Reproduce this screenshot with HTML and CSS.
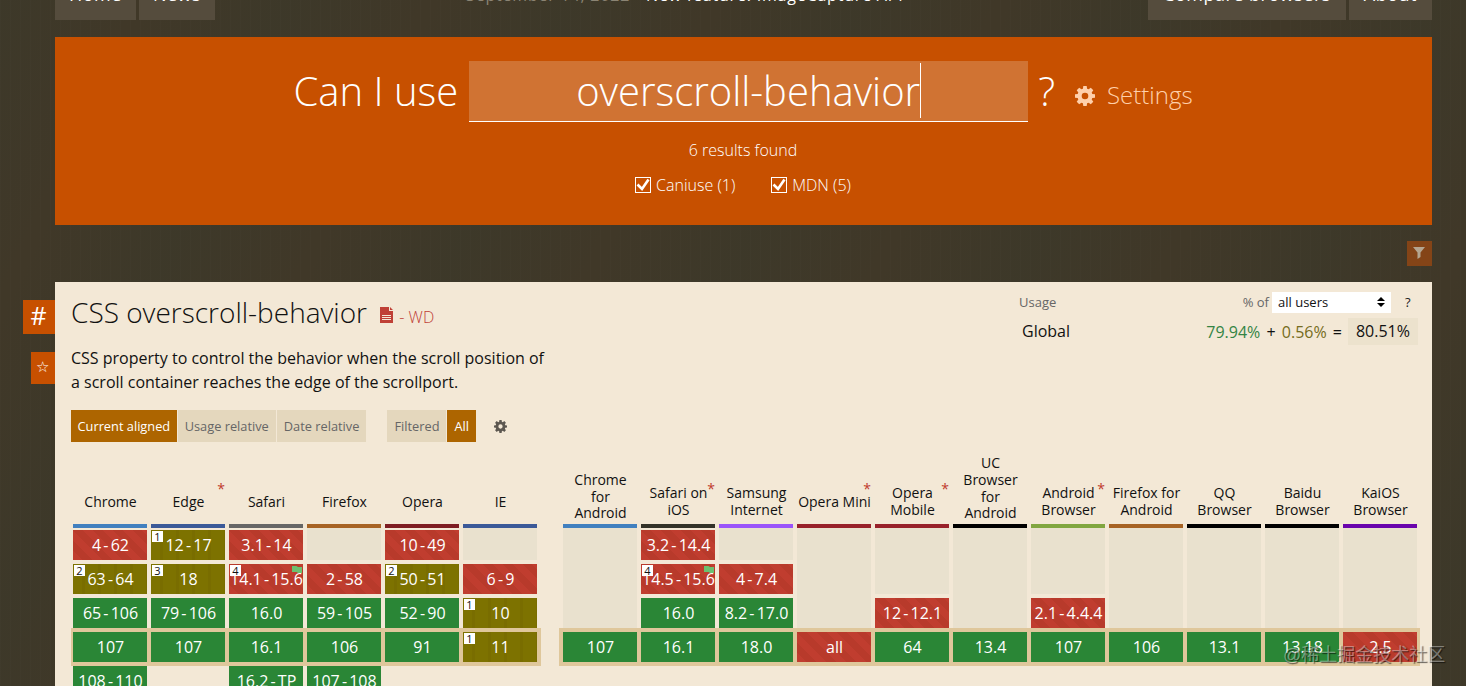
FILE: index.html
```
<!DOCTYPE html>
<html lang="en">
<head>
    <meta charset="UTF-8">
    <meta name="viewport" content="width=device-width, initial-scale=1.0">
    <title>Can I use... overscroll-behavior</title>
    <link rel="stylesheet" href="styles.css">
</head>
<body>
    <svg class="defs" width="0" height="0">
        <symbol id="gear" viewBox="0 0 20 20">
            <path fill-rule="evenodd" d="M8.3 0h3.4l.4 2.7 1.5.6 2.2-1.6 2.5 2.5-1.6 2.2.6 1.5 2.7.4v3.4l-2.7.4-.6 1.5 1.6 2.2-2.5 2.5-2.2-1.6-1.5.6-.4 2.7H8.3l-.4-2.7-1.5-.6-2.2 1.6-2.5-2.5 1.6-2.2-.6-1.5L0 11.7V8.3l2.7-.4.6-1.5L1.7 4.2l2.5-2.5 2.2 1.6 1.5-.6zM10 6.700a3.300 3.300 0 1 0 0 6.600 3.300 3.300 0 0 0 0-6.600z"/>
        </symbol>
    </svg>

    <div class="page">
        <header class="topbar">
            <nav>
                <a href="#">Home</a>
                <a href="#">News</a>
            </nav>
            <p class="news"><span>September 14, 2022</span> - New feature: ImageCapture API</p>
            <nav class="right">
                <a href="#">Compare browsers</a>
                <a href="#">About</a>
            </nav>
        </header>

        <section class="hero">
            <div class="search">
                <span class="big">Can I use</span>
                <div class="search-box"><span>overscroll-behavior</span></div>
                <span class="big">?</span>
                <a class="settings" href="#"><svg><use href="#gear"/></svg>Settings</a>
            </div>
            <p class="results">6 results found</p>
            <div class="filters">
                <label><i class="check"><svg viewBox="0 0 14 14"><path d="M1.500 6.500L6 11l6.500-9.500"/></svg></i>Caniuse (1)</label>
                <label><i class="check"><svg viewBox="0 0 14 14"><path d="M1.500 6.500L6 11l6.500-9.500"/></svg></i>MDN (5)</label>
            </div>
        </section>

        <div class="toolbar">
            <a class="filter-btn" href="#"><svg viewBox="0 0 12 12"><path d="M0 0h12L7.500 5.500V10L4.500 12V5.500z"/></svg></a>
        </div>

        <article class="feature">
            <a class="side hash" href="#">#</a>
            <a class="side star" href="#">☆</a>

            <div class="feature-top">
                <div class="info">
                    <h1>CSS overscroll-behavior
                        <a class="spec" href="#"><svg viewBox="0 0 13 16"><path d="M0 0h9v4h4v12H0zM10 0l3 3h-3z"/><path class="lines" d="M2 8.500h9M2 10.500h9M2 12.500h9"/></svg>- WD</a>
                    </h1>
                    <p class="desc">CSS property to control the behavior when the scroll position of<br>a scroll container reaches the edge of the scrollport.</p>
                </div>
                <div class="usage">
                    <div class="usage-row small">
                        <span class="label">Usage</span>
                        <span class="of">% of</span>
                        <div class="select">all users<svg viewBox="0 0 8 10"><path d="M0 4l4-4 4 4zM0 6h8l-4 4z"/></svg></div>
                        <span class="help">?</span>
                    </div>
                    <div class="usage-row">
                        <span class="global">Global</span>
                        <span class="sum"><b class="yes">79.94%</b> + <b class="part">0.56%</b> =</span>
                        <span class="total">80.51%</span>
                    </div>
                </div>
            </div>

            <div class="modes">
                <a class="active" href="#">Current aligned</a>
                <a href="#">Usage relative</a>
                <a href="#">Date relative</a>
                <a class="gap" href="#">Filtered</a>
                <a class="active" href="#">All</a>
                <svg><use href="#gear"/></svg>
            </div>

            <div class="tables">
                <div class="table desktop">
                    <div class="col">
                        <h4>Chrome</h4>
                        <ol class="chrome">
                            <li class="n">4 - 62</li>
                            <li class="a"><sup>2</sup>63 - 64</li>
                            <li class="y">65 - 106</li>
                            <li class="y current">107</li>
                            <li class="y">108 - 110</li>
                        </ol>
                    </div>
                    <div class="col">
                        <h4>Edge<em>*</em></h4>
                        <ol class="edge">
                            <li class="a"><sup>1</sup>12 - 17</li>
                            <li class="a"><sup>3</sup>18</li>
                            <li class="y">79 - 106</li>
                            <li class="y current">107</li>
                        </ol>
                    </div>
                    <div class="col">
                        <h4>Safari</h4>
                        <ol class="safari">
                            <li class="n">3.1 - 14</li>
                            <li class="n flag"><sup>4</sup>14.1 - 15.6</li>
                            <li class="y">16.0</li>
                            <li class="y current">16.1</li>
                            <li class="y">16.2 - TP</li>
                        </ol>
                    </div>
                    <div class="col">
                        <h4>Firefox</h4>
                        <ol class="firefox">
                            <li class="empty"></li>
                            <li class="n">2 - 58</li>
                            <li class="y">59 - 105</li>
                            <li class="y current">106</li>
                            <li class="y">107 - 108</li>
                        </ol>
                    </div>
                    <div class="col">
                        <h4>Opera</h4>
                        <ol class="opera">
                            <li class="n">10 - 49</li>
                            <li class="a"><sup>2</sup>50 - 51</li>
                            <li class="y">52 - 90</li>
                            <li class="y current">91</li>
                        </ol>
                    </div>
                    <div class="col">
                        <h4>IE</h4>
                        <ol class="ie">
                            <li class="empty"></li>
                            <li class="n">6 - 9</li>
                            <li class="a"><sup>1</sup>10</li>
                            <li class="a current"><sup>1</sup>11</li>
                        </ol>
                    </div>
                </div>

                <div class="table mobile">
                    <div class="col">
                        <h4 class="tall">Chrome<br>for<br>Android</h4>
                        <ol class="chrome">
                            <li class="empty x3"></li>
                            <li class="y current">107</li>
                        </ol>
                    </div>
                    <div class="col">
                        <h4>Safari on<br>iOS<em>*</em></h4>
                        <ol class="ios">
                            <li class="n">3.2 - 14.4</li>
                            <li class="n flag"><sup>4</sup>14.5 - 15.6</li>
                            <li class="y">16.0</li>
                            <li class="y current">16.1</li>
                        </ol>
                    </div>
                    <div class="col">
                        <h4>Samsung<br>Internet</h4>
                        <ol class="samsung">
                            <li class="empty"></li>
                            <li class="n">4 - 7.4</li>
                            <li class="y">8.2 - 17.0</li>
                            <li class="y current">18.0</li>
                        </ol>
                    </div>
                    <div class="col">
                        <h4>Opera Mini<em>*</em></h4>
                        <ol class="op-mob">
                            <li class="empty x3"></li>
                            <li class="n current">all</li>
                        </ol>
                    </div>
                    <div class="col">
                        <h4>Opera<br>Mobile<em>*</em></h4>
                        <ol class="op-mob">
                            <li class="empty x2"></li>
                            <li class="n">12 - 12.1</li>
                            <li class="y current">64</li>
                        </ol>
                    </div>
                    <div class="col">
                        <h4 class="tall">UC<br>Browser<br>for<br>Android</h4>
                        <ol class="other">
                            <li class="empty x3"></li>
                            <li class="y current">13.4</li>
                        </ol>
                    </div>
                    <div class="col">
                        <h4>Android<br>Browser<em>*</em></h4>
                        <ol class="android">
                            <li class="empty x2"></li>
                            <li class="n">2.1 - 4.4.4</li>
                            <li class="y current">107</li>
                        </ol>
                    </div>
                    <div class="col">
                        <h4>Firefox for<br>Android</h4>
                        <ol class="firefox">
                            <li class="empty x3"></li>
                            <li class="y current">106</li>
                        </ol>
                    </div>
                    <div class="col">
                        <h4>QQ<br>Browser</h4>
                        <ol class="other">
                            <li class="empty x3"></li>
                            <li class="y current">13.1</li>
                        </ol>
                    </div>
                    <div class="col">
                        <h4>Baidu<br>Browser</h4>
                        <ol class="other">
                            <li class="empty x3"></li>
                            <li class="y current">13.18</li>
                        </ol>
                    </div>
                    <div class="col">
                        <h4>KaiOS<br>Browser</h4>
                        <ol class="kaios">
                            <li class="empty x3"></li>
                            <li class="n current">2.5</li>
                        </ol>
                    </div>
                </div>
            </div>
        </article>
    </div>

    <div class="watermark">@稀土掘金技术社区</div>
</body>
</html>
```
FILE: styles.css
```
* {
    box-sizing: border-box;
}
body {
    margin: 0;
    height: 686px;
    overflow: hidden;
    position: relative;
    font-family: "Open Sans", sans-serif;
    font-size: 16px;
    color: #111;
    background-color: #403828;
    background-image:
        repeating-linear-gradient(90deg, rgba(255, 255, 255, 0.012) 0 1px, transparent 1px 10px),
        repeating-linear-gradient(115deg, rgba(40, 60, 50, 0.12) 0, transparent 130px, rgba(40, 60, 50, 0.12) 260px);
}
a {
    color: inherit;
    text-decoration: none;
}
h1, h4, p, ol {
    margin: 0;
    padding: 0;
    font-weight: normal;
}
.defs {
    position: absolute;
}
.page {
    width: 1377px;
    margin-left: 55px;
}

/* top bar, scrolled mostly out of view */
.topbar {
    display: flex;
    height: 37px;
    color: #fff;
    font-size: 18px;
    letter-spacing: 0.5px;
}
.topbar nav {
    display: flex;
    gap: 3px;
}
.topbar nav.right {
    margin-left: auto;
}
.topbar nav a {
    padding: 0 14px;
    background: #554c3d;
}
.topbar nav.right a {
    padding: 0 15px;
}
.topbar nav a, .news {
    height: 36px;
    margin-top: -16px;
    line-height: 20px;
}
.news {
    margin-left: 251px;
    font-size: 16px;
    line-height: 23px;
    letter-spacing: 0.800px;
    white-space: nowrap;
}
.news span {
    color: #8b8474;
}

/* search */
.hero {
    height: 188px;
    padding: 24px 1px 0 0;
    background: #c75000;
    color: #fff;
    text-align: center;
}
.search {
    display: flex;
    justify-content: center;
    height: 61px;
}
.big {
    font-size: 40px;
    font-weight: 300;
    line-height: 60px;
}
.search-box {
    width: 559px;
    height: 61px;
    margin: 0 10px 0 11px;
    padding-top: 2px;
    background: #d07333;
    border-bottom: 1px solid #fff;
    font-size: 40px;
    font-weight: 300;
    line-height: 56px;
}
.search-box span {
    display: inline-block;
    height: 55px;
    border-right: 1px solid #fff;
}
.settings {
    display: flex;
    align-items: center;
    margin-left: 20px;
    padding-top: 5px;
    font-size: 24px;
    font-weight: 300;
    color: #ffd0ab;
}
.settings svg {
    width: 20px;
    height: 20px;
    margin: 3px 12px 0 0;
    fill: #ffd0ab;
}
.results {
    margin-top: 16px;
    font-weight: 300;
    line-height: 24px;
}
.filters {
    display: flex;
    justify-content: center;
    gap: 36px;
    margin-top: 11px;
    font-weight: 300;
    line-height: 24px;
}
.filters label {
    display: flex;
    align-items: center;
}
.check {
    display: flex;
    width: 16px;
    height: 16px;
    margin-right: 5px;
    border: 1px solid #fff;
}
.check svg {
    fill: none;
    stroke: #fff;
    stroke-width: 2.600;
}
.toolbar {
    display: flex;
    justify-content: flex-end;
    height: 57px;
    padding-top: 16px;
}
.filter-btn {
    display: flex;
    align-items: center;
    justify-content: center;
    width: 25px;
    height: 25px;
    padding: 0 1px 1px 0;
    background: #844417;
}
.filter-btn svg {
    width: 12px;
    height: 12px;
    fill: #b4a590;
}

/* feature card */
.feature {
    position: relative;
    height: 420px;
    padding: 8px 12px 0 16px;
    background: #f3e8d6;
}
.side {
    position: absolute;
    right: 100%;
    background: #c75000;
    color: #fff;
    text-align: center;
}
.hash {
    top: 18px;
    width: 32px;
    height: 34px;
    padding-right: 1px;
    font-size: 25px;
    line-height: 31px;
}
.star {
    top: 70px;
    width: 24px;
    height: 32px;
    padding-right: 1px;
    font-size: 15px;
    line-height: 28px;
}
.feature-top {
    display: flex;
    justify-content: space-between;
    height: 120px;
}
h1 {
    font-size: 28px;
    font-weight: 300;
    line-height: 44px;
}
.spec {
    margin-left: 6px;
    font-size: 16px;
    color: #bf4036;
}
.spec svg {
    width: 13px;
    height: 16px;
    margin-right: 6px;
    fill: #bf4036;
}
.spec .lines {
    stroke: #f3e8d6;
}
.desc {
    margin-top: 7px;
    line-height: 24px;
}
.usage {
    width: 401px;
}
.usage-row {
    display: flex;
    align-items: center;
    height: 27px;
    margin-top: 5px;
    padding: 0 2px 0 3px;
}
.usage-row.small {
    height: 23px;
    margin-top: 0;
    padding: 0;
    font-size: 13px;
    color: #666;
}
.label, .global {
    flex: 1;
}
.global {
    margin-top: -1px;
}
.select {
    display: flex;
    align-items: center;
    justify-content: space-between;
    width: 119px;
    height: 21px;
    margin: 1px 0 0 3px;
    padding: 0 6px 1px;
    background: #fff;
    color: #111;
}
.select svg {
    width: 8px;
    height: 10px;
}
.help {
    width: 29px;
    padding-left: 14px;
    color: #222;
}
.sum b {
    font-weight: normal;
}
.sum {
    word-spacing: 2px;
}
.yes {
    color: #338444;
}
.part {
    color: #756c20;
}
.total {
    margin-left: 6px;
    padding: 0 8px;
    line-height: 27px;
    background: #ece2cd;
}
.modes {
    display: flex;
    gap: 1px;
    height: 32px;
    font-size: 12.800px;
    line-height: 32px;
}
.modes a {
    padding: 0 7px;
    background: #e4d7bd;
    color: #666;
}
.modes a:first-child {
    padding: 0 6.500px;
}
.modes .gap {
    margin-left: 20px;
}
.modes .active {
    background: #ad6500;
    color: #fff;
}
.modes svg {
    width: 13px;
    height: 13px;
    margin: 10px 0 0 17px;
    fill: #5c5750;
}

/* support tables */
.tables {
    display: flex;
    margin-top: 10px;
    height: 244px;
}
.table {
    display: flex;
    gap: 4px;
    overflow: hidden;
}
.desktop {
    padding: 0 4px 0 2px;
}
.mobile {
    margin-left: 18px;
    padding: 0 3px 0 4px;
}
.col {
    width: 74px;
}
.col h4 {
    position: relative;
    display: flex;
    flex-direction: column;
    justify-content: center;
    height: 72px;
    padding: 32px 0 4px 1px;
    font-size: 14px;
    line-height: 16.700px;
    text-align: center;
    white-space: nowrap;
}
.col h4.tall {
    justify-content: flex-end;
    padding: 0 0 2px 1px;
}
.col ol {
    list-style: none;
    border-top: 4px solid #000;
}
li {
    position: relative;
    display: flex;
    align-items: center;
    justify-content: center;
    height: 30px;
    margin-bottom: 4px;
    padding-left: 1px;
    color: #fff;
    white-space: nowrap;
    word-spacing: -2px;
}
li:first-child {
    margin-top: 2px;
}
.y {
    background: #2a8636;
}
.n {
    background: repeating-linear-gradient(45deg, #c03d2f 0 7px, #b83a2b 7px 14px);
}
.a {
    background: repeating-linear-gradient(90deg, #7d7200 0 9px, #796d00 9px 12px, #7d7200 12px 16px);
}

/* gaps before a browser's first release */
li.empty {
    height: 32px;
    margin-top: 0;
    background: #e9e1ce;
}
li.x2 {
    height: 66px;
}
li.x3 {
    height: 100px;
}
.current {
    box-shadow: 0 0 0 4px #dfc79b;
}
sup {
    position: absolute;
    top: 1px;
    left: 1px;
    width: 11px;
    height: 11px;
    background: #fff;
    color: #111;
    font-size: 11px;
    line-height: 11px;
    text-align: center;
}
.flag::after {
    content: "";
    position: absolute;
    top: 2px;
    right: 1px;
    width: 10px;
    height: 7px;
    background: #6cc070;
    clip-path: polygon(0 0, 45% 0, 60% 15%, 100% 15%, 100% 100%, 60% 100%, 45% 85%, 0 85%);
}
h4 em {
    position: absolute;
    top: 29px;
    right: 0;
    font-style: normal;
    color: #c0392b;
}
.col .chrome { border-color: #4180bf; }
.col .edge, .col .ie { border-color: #3b5998; }
.col .safari { border-color: #666; }
.col .firefox { border-color: #a76324; }
.col .opera { border-color: #7e1c22; }
.col .ios { border-color: #333228; }
.col .samsung { border-color: #9b54fa; }
.col .op-mob { border-color: #98212a; }
.col .android { border-color: #81a640; }
.col .kaios { border-color: #6a04ac; }

.watermark {
    position: absolute;
    top: 642px;
    left: 1283px;
    font-family: "Liberation Sans", "Noto Sans CJK SC", sans-serif;
    font-size: 18px;
    line-height: 26px;
    white-space: nowrap;
    color: rgba(255, 255, 255, 0.4);
    text-shadow: 1px 1px 1px rgba(0, 0, 0, 0.6);
}
```
